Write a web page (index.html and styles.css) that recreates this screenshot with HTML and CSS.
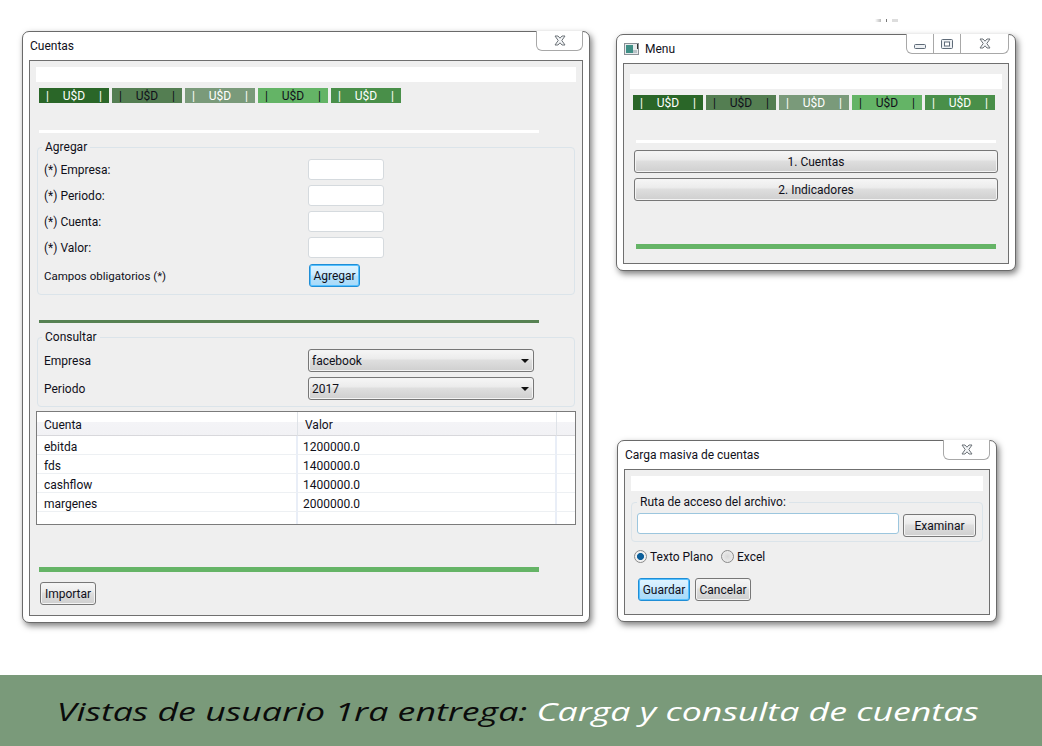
FILE: index.html
```html
<!DOCTYPE html>
<html lang="es">
<head>
<meta charset="utf-8">
<title>Vistas de usuario</title>
<link rel="stylesheet" href="styles.css">
</head>
<body>
<main class="desktop">
  <div class="stray"><i></i><i></i><i></i></div>

  <section class="window window--cuentas">
    <header class="titlebar"><span>Cuentas</span></header>
    <div class="controls controls--close">
      <span class="control control--x"><svg width="12" height="11" viewBox="0 0 12 11"><path d="M1 1h3l2 2.200L8 1h3L7.800 5.500 11 10H8L6 7.800 4 10H1l3.200-4.500z" fill="#f4f6f8" stroke="#6d7378"/></svg></span>
    </div>
    <div class="panel">
      <div class="whitebar"></div>
      <div class="tabs">
        <div class="tab tab--1"><span>|</span><span>U$D</span><span>|</span></div>
        <div class="tab tab--2"><span>|</span><span>U$D</span><span>|</span></div>
        <div class="tab tab--3"><span>|</span><span>U$D</span><span>|</span></div>
        <div class="tab tab--4"><span>|</span><span>U$D</span><span>|</span></div>
        <div class="tab tab--5"><span>|</span><span>U$D</span><span>|</span></div>
      </div>
      <div class="rule rule--white rule--sep1"></div>
      <fieldset class="group group--agregar">
        <legend>Agregar</legend>
        <div class="formrow"><label>(*) Empresa:</label><input class="field" type="text"></div>
        <div class="formrow"><label>(*) Periodo:</label><input class="field" type="text"></div>
        <div class="formrow"><label>(*) Cuenta:</label><input class="field" type="text"></div>
        <div class="formrow"><label>(*) Valor:</label><input class="field" type="text"></div>
        <div class="formrow formrow--action"><label class="note">Campos obligatorios (*)</label><button class="btn btn--focus btn--agregar">Agregar</button></div>
      </fieldset>
      <div class="rule rule--mid rule--sep2"></div>
      <fieldset class="group group--consultar">
        <legend>Consultar</legend>
        <div class="formrow formrow--select"><label>Empresa</label><div class="select">facebook</div></div>
        <div class="formrow formrow--select"><label>Periodo</label><div class="select">2017</div></div>
      </fieldset>
      <table class="grid">
        <colgroup><col class="grid__c1"><col class="grid__c2"><col class="grid__c3"></colgroup>
        <thead><tr><th>Cuenta</th><th>Valor</th><th></th></tr></thead>
        <tbody>
          <tr><td>ebitda</td><td>1200000.0</td><td></td></tr>
          <tr><td>fds</td><td>1400000.0</td><td></td></tr>
          <tr><td>cashflow</td><td>1400000.0</td><td></td></tr>
          <tr><td>margenes</td><td>2000000.0</td><td></td></tr>
          <tr class="grid__empty"><td></td><td></td><td></td></tr>
        </tbody>
      </table>
      <div class="rule rule--bright rule--sep3"></div>
      <button class="btn btn--importar">Importar</button>
    </div>
  </section>

  <section class="window window--menu">
    <header class="titlebar">
      <svg class="appicon" width="16" height="14" viewBox="0 0 16 14"><rect x="0.500" y="1.500" width="14" height="11" fill="#e8eaec" stroke="#8a9096"/><rect x="2" y="3" width="7" height="8" fill="#3f8f86"/><rect x="9" y="8" width="4" height="3" fill="#b9c4c8"/><rect x="13" y="2" width="1" height="5" fill="#333"/></svg>
      <span>Menu</span>
    </header>
    <div class="controls controls--full">
      <span class="control control--min"><svg width="12" height="5" viewBox="0 0 12 5"><rect x="0.500" y="0.500" width="11" height="4" rx="1" fill="#eef1f4" stroke="#5f6b78"/></svg></span>
      <span class="control control--max"><svg width="12" height="10" viewBox="0 0 12 10"><rect x="0.500" y="0.500" width="11" height="9" rx="1" fill="#eef1f4" stroke="#5f6b78"/><rect x="3.500" y="3" width="5" height="4" fill="#fff" stroke="#5f6b78"/></svg></span>
      <span class="control control--x control--xwide"><svg width="12" height="11" viewBox="0 0 12 11"><path d="M1 1h3l2 2.200L8 1h3L7.800 5.500 11 10H8L6 7.800 4 10H1l3.200-4.500z" fill="#f4f6f8" stroke="#6d7378"/></svg></span>
    </div>
    <div class="panel panel--menu">
      <div class="whitebar"></div>
      <div class="tabs">
        <div class="tab tab--1"><span>|</span><span>U$D</span><span>|</span></div>
        <div class="tab tab--2"><span>|</span><span>U$D</span><span>|</span></div>
        <div class="tab tab--3"><span>|</span><span>U$D</span><span>|</span></div>
        <div class="tab tab--4"><span>|</span><span>U$D</span><span>|</span></div>
        <div class="tab tab--5"><span>|</span><span>U$D</span><span>|</span></div>
      </div>
      <div class="rule rule--white rule--menu1"></div>
      <button class="btn btn--wide btn--first">1. Cuentas</button>
      <button class="btn btn--wide btn--second">2. Indicadores</button>
      <div class="rule rule--bright rule--menu2"></div>
    </div>
  </section>

  <section class="window window--carga">
    <header class="titlebar"><span>Carga masiva de cuentas</span></header>
    <div class="controls controls--close">
      <span class="control control--x"><svg width="12" height="11" viewBox="0 0 12 11"><path d="M1 1h3l2 2.200L8 1h3L7.800 5.500 11 10H8L6 7.800 4 10H1l3.200-4.500z" fill="#f4f6f8" stroke="#6d7378"/></svg></span>
    </div>
    <div class="panel">
      <div class="whitebar"></div>
      <fieldset class="group group--ruta">
        <legend>Ruta de acceso del archivo:</legend>
        <div class="pathrow">
          <input class="field field--path" type="text">
          <button class="btn btn--examinar">Examinar</button>
        </div>
      </fieldset>
      <div class="radios">
        <span class="radio radio--on"></span><span class="radios__label">Texto Plano</span>
        <span class="radio"></span><span class="radios__label">Excel</span>
      </div>
      <div class="actions">
        <button class="btn btn--focus btn--guardar">Guardar</button>
        <button class="btn btn--cancelar">Cancelar</button>
      </div>
    </div>
  </section>
</main>
<footer class="banner">
  <p class="banner__text">Vistas de usuario 1ra entrega: <em>Carga y consulta de cuentas</em></p>
</footer>
</body>
</html>
```

FILE: styles.css
```css
* { box-sizing: border-box; }
html, body { margin: 0; padding: 0; }
body {
  width: 1042px;
  height: 746px;
  overflow: hidden;
  background: #fff;
  font-family: Roboto, "Noto Sans", sans-serif;
  font-size: 12px;
  color: #10101a;
}
.desktop { position: relative; height: 675px; }

.stray { position: absolute; left: 875px; top: 19px; display: flex; gap: 5px; height: 3px; }
.stray i { display: block; width: 6px; background: linear-gradient(90deg, #fff, #bbb); }
.stray i:nth-child(2) { width: 1px; background: #777; }
.stray i:nth-child(3) { background: #ddd; }

/* windows */
.window {
  position: absolute;
  display: flex;
  flex-direction: column;
  padding: 0 6px 6px;
  background: #fff;
  border: 1px solid #6a6a6a;
  border-radius: 7px;
  box-shadow: 2px 3px 6px rgba(0, 0, 0, .5);
}
.window--cuentas { left: 22px; top: 31px; width: 568px; height: 592px; }
.window--menu { left: 616px; top: 34px; width: 400px; height: 237px; }
.window--carga { left: 617px; top: 440px; width: 380px; height: 182px; }

.titlebar {
  flex: none;
  height: 28px;
  display: flex;
  align-items: center;
  gap: 5px;
  padding: 0 1px;
  font-size: 12px;
  line-height: 28px;
}
.appicon { flex: none; }
.controls {
  position: absolute;
  top: -1px;
  right: 6px;
  height: 20px;
  display: flex;
  background: #fff;
  border: 1px solid #a8a8a8;
  border-top: 0;
  border-radius: 0 0 6px 6px;
}
.controls--close { width: 47px; }
.controls--full { width: 103px; }
.control { display: flex; justify-content: center; align-items: center; height: 100%; }
.controls--close .control { width: 100%; }
.control--min { width: 27px; border-right: 1px solid #a8a8a8; padding-top: 6px; }
.control--max { width: 27px; border-right: 1px solid #a8a8a8; }
.control--xwide { flex: 1; }

.panel {
  flex: 1;
  min-height: 0;
  padding: 6px;
  background: #efefef;
  border: 1px solid #6f6f6f;
}
.panel--menu { padding-top: 10px; }
.whitebar { height: 15px; background: #fff; }

.tabs { display: flex; gap: 3px; margin: 6px 0 0 3px; }
.tab {
  width: 70px;
  height: 15px;
  padding: 1px 7px 0;
  display: flex;
  justify-content: space-between;
  align-items: center;
  font-size: 12px;
  line-height: 15px;
}
.tab--1 { background: #2a6628; color: #fff; }
.tab--2 { background: #547e52; color: #10101a; }
.tab--3 { background: #7a9a7a; color: #fff; }
.tab--4 { background: #64b466; color: #10101a; }
.tab--5 { background: #498f49; color: #fff; }

.rule { height: 3px; }
.rule--white { background: #fff; }
.rule--mid { background: #568152; }
.rule--bright { background: #65b466; height: 5px; }
.rule--sep1 { width: 500px; margin: 27px 0 0 3px; }
.rule--sep2 { width: 500px; margin: 25px 0 0 3px; }
.rule--sep3 { width: 500px; margin: 42px 0 0 3px; }
.rule--menu1 { width: 360px; margin: 30px 0 0 6px; }
.rule--menu2 { width: 360px; margin: 43px 0 0 6px; }

/* groups */
.group {
  margin: 7px 1px 0;
  padding: 5px 6px 0;
  min-width: 0;
  border: 1px solid #dbe4ea;
  border-radius: 4px;
}
.group legend {
  margin-left: -2px;
  padding: 0 3px;
  height: 14px;
  line-height: 14px;
  font-size: 12px;
}
.group--agregar { height: 155px; }
.group--consultar { height: 77px; }
.group--ruta { margin: 4px 0 0; height: 47px; padding: 4px 6px 0 5px; }
.group--ruta legend { margin-left: 0; }

.formrow {
  display: grid;
  grid-template-columns: 264px auto;
  justify-content: start;
  align-items: center;
  height: 21px;
  margin-bottom: 5px;
}
.note { font-size: 11.5px; }
.formrow--action { height: 23px; margin-top: 6px; }
.formrow--select { height: 23px; margin-bottom: 5px; }

.field {
  display: block;
  width: 76px;
  height: 21px;
  padding: 0 4px;
  background: #fff;
  border: 1px solid #d5dade;
  border-radius: 3px;
  outline: 0;
}
.field--path { width: 262px; border-color: #9cc6de; }

.btn {
  display: block;
  height: 23px;
  padding: 0;
  font: inherit;
  color: #10101a;
  background: linear-gradient(#f6f6f6 0, #ececec 40%, #dedede 50%, #cfcfcf 100%);
  border: 1px solid #777;
  border-radius: 3px;
  box-shadow: inset 0 0 0 1px #f4f4f4;
}
.btn--focus {
  background: linear-gradient(#e0f4ff 0, #cdebff 45%, #b4e0fb 55%, #a8daf9 100%);
  border: 1px solid #1f8ed6;
  box-shadow: inset 0 0 0 1px #54c0ff;
}
.btn--agregar { width: 51px; margin-left: 1px; }
.btn--importar { width: 56px; margin: 10px 0 0 4px; }
.btn--wide { width: 364px; margin-left: 4px; }
.btn--first { margin-top: 7px; }
.btn--second { margin-top: 5px; }
.btn--examinar { width: 73px; margin: 1px 0 0 4px; }
.btn--guardar { width: 52px; }
.btn--cancelar { width: 56px; }

.select {
  position: relative;
  width: 226px;
  height: 23px;
  padding-left: 3px;
  line-height: 22px;
  background: linear-gradient(#f6f6f6 0, #ececec 40%, #dedede 50%, #cfcfcf 100%);
  border: 1px solid #777;
  border-radius: 3px;
  box-shadow: inset 0 0 0 1px #f4f4f4;
}
.select::after {
  content: "";
  position: absolute;
  right: 4px;
  top: 9px;
  border-left: 4px solid transparent;
  border-right: 4px solid transparent;
  border-top: 4px solid #111;
}

/* table */
.grid {
  width: 540px;
  margin-top: 4px;
  table-layout: fixed;
  border-collapse: separate;
  border-spacing: 0;
  background: #fff;
  border: 1px solid #7b7b7b;
}
.grid__c1 { width: 261px; }
.grid__c2 { width: 259px; }
.grid__c3 { width: 18px; }
.grid th {
  height: 24px;
  padding: 2px 0 0 7px;
  text-align: left;
  font-weight: 400;
  background: linear-gradient(#fff 0, #fff 42%, #f4f4f7 45%, #f2f2f5 100%);
  border-bottom: 1px solid #d8d8dc;
  border-right: 1px solid #dfe3e8;
}
.grid th:last-child { border-right: 0; }
.grid td {
  height: 19px;
  padding: 3px 0 0 7px;
  border-bottom: 1px solid #edf0f3;
  border-right: 2px solid #e9eef7;
}
.grid td:nth-child(2) { padding-left: 5px; }
.grid td:last-child { border-right: 0; }
.grid__empty td { height: 12px; padding: 0; border-bottom: 0; }

/* carga */
.pathrow { display: flex; align-items: flex-start; }
.radios {
  display: flex;
  align-items: center;
  height: 15px;
  margin: 7px 0 0 3px;
}
.radio {
  width: 13px;
  height: 13px;
  flex: none;
  border: 1px solid #8a8a8a;
  border-radius: 50%;
  background: radial-gradient(circle, #d8d8d8 0, #f2f2f2 100%);
}
.radio--on { background: radial-gradient(circle, #0d5f9a 0, #0d5f9a 40%, #f2f2f2 50%); }
.radios__label { margin: 0 8px 0 3px; }
.actions { display: flex; gap: 5px; margin: 14px 0 0 7px; }

/* banner */
.banner {
  height: 71px;
  background: #7a9a7a;
  display: flex;
  align-items: center;
  justify-content: center;
  padding-right: 6px;
}
.banner__text {
  margin: 0;
  white-space: nowrap;
  font-family: "Open Sans", "Noto Sans", sans-serif;
  font-style: italic;
  font-size: 25px;
  color: #0b0b0b;
  transform: scaleX(1.428);
}
.banner__text em { color: #fff; }
```
